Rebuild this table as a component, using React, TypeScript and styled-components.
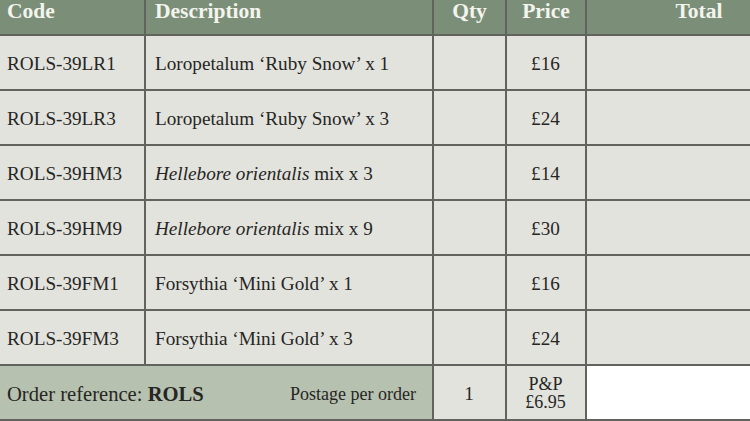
import React, {FC, ReactNode} from 'react'
import styled, {createGlobalStyle} from 'styled-components'

const GlobalStyle = createGlobalStyle`
  html, body {
    margin: 0;
    padding: 0;
    background: #ffffff;
    overflow: hidden;
  }
`

const Frame = styled.div`
  width: 750px;
  height: 421px;
  overflow: hidden;
`

const Table = styled.div`
  display: grid;
  grid-template-columns: 144px 286px 71px 78px 224px;
  grid-template-rows: 34px repeat(7, 53px);
  column-gap: 2px;
  row-gap: 2px;
  width: 811px;
  padding-bottom: 2px;
  background-color: #62625f;
  font-family: "Liberation Serif", "DejaVu Serif", serif;
  color: #262624;
`

const HeadCell = styled.div<{$center?: boolean; $inset?: number}>`
  background-color: #7b8f78;
  color: #f4f4ee;
  font-size: 21.5px;
  font-weight: bold;
  line-height: 22px;
  padding: 0 7px 0 ${props => props.$inset ?? 7}px;
  text-align: ${props => (props.$center ? 'center' : 'left')};
`

const Cell = styled.div<{$center?: boolean; $inset?: number}>`
  background-color: #e3e3de;
  font-size: 19.2px;
  display: flex;
  align-items: center;
  justify-content: ${props => (props.$center ? 'center' : 'flex-start')};
  padding: 3px 8px 0 ${props => props.$inset ?? 7}px;
`

const FooterRef = styled.div`
  grid-column: span 2;
  background-color: #b7c1af;
  display: flex;
  align-items: center;
  justify-content: space-between;
  padding: 3px 16px 0 7px;
  font-size: 20.6px;

  b {
    font-weight: bold;
  }
`

const Postage = styled.span`
  font-size: 18px;
`

const PandP = styled(Cell)`
  flex-direction: column;
  font-size: 18px;
  line-height: 18px;
  padding-top: 1px;
`

const Blank = styled.div`
  background-color: #ffffff;
`

interface Item {
  code: string
  desc: ReactNode
  price: string
}

const items: Item[] = [
  {code: 'ROLS-39LR1', desc: 'Loropetalum ‘Ruby Snow’ x 1', price: '£16'},
  {code: 'ROLS-39LR3', desc: 'Loropetalum ‘Ruby Snow’ x 3', price: '£24'},
  {code: 'ROLS-39HM3', desc: <><i>Hellebore orientalis</i>&nbsp;mix x 3</>, price: '£14'},
  {code: 'ROLS-39HM9', desc: <><i>Hellebore orientalis</i>&nbsp;mix x 9</>, price: '£30'},
  {code: 'ROLS-39FM1', desc: 'Forsythia ‘Mini Gold’ x 1', price: '£16'},
  {code: 'ROLS-39FM3', desc: 'Forsythia ‘Mini Gold’ x 3', price: '£24'},
]

const App: FC = () => (
  <Frame>
    <GlobalStyle/>
    <Table>
      <HeadCell>Code</HeadCell>
      <HeadCell $inset={9}>Description</HeadCell>
      <HeadCell $center>Qty</HeadCell>
      <HeadCell $center>Price</HeadCell>
      <HeadCell $center>Total</HeadCell>
      {items.map(item => (
        <React.Fragment key={item.code}>
          <Cell>{item.code}</Cell>
          <Cell $inset={9}>{item.desc}</Cell>
          <Cell $center/>
          <Cell $center>{item.price}</Cell>
          <Cell/>
        </React.Fragment>
      ))}
      <FooterRef>
        <span>Order reference: <b>ROLS</b></span>
        <Postage>Postage per order</Postage>
      </FooterRef>
      <Cell $center>1</Cell>
      <PandP $center>
        <span>P&amp;P</span>
        <span>£6.95</span>
      </PandP>
      <Blank/>
    </Table>
  </Frame>
)

export default App
